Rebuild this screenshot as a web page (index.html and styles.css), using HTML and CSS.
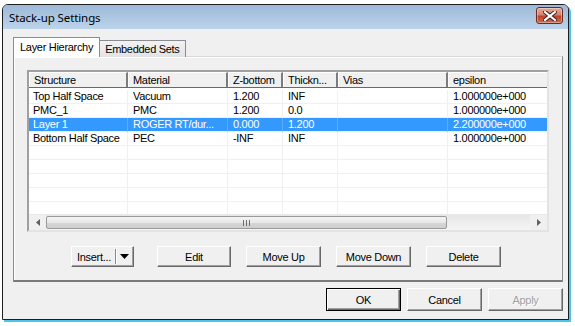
FILE: index.html
```html
<!DOCTYPE html>
<html>
<head>
<meta charset="utf-8">
<link rel="stylesheet" href="styles.css">
</head>
<body>
<div class="window">
  <div class="titlebar">
    <span class="title">Stack-up Settings</span>
    <div class="close">
      <svg width="14" height="10" viewBox="0 0 14 10"><path d="M2 1 L12 9 M12 1 L2 9" stroke="#3b1a14" stroke-width="4" stroke-linecap="square"/><path d="M2 1 L12 9 M12 1 L2 9" stroke="#fff" stroke-width="2.2" stroke-linecap="square"/></svg>
    </div>
  </div>
  <div class="client">
    <div class="tabs">
      <div class="tab active">Layer Hierarchy</div>
      <div class="tab">Embedded Sets</div>
    </div>
    <div class="panel">
      <div class="list">
        <div class="header">
          <div class="hcell c1">Structure</div>
          <div class="hcell c2">Material</div>
          <div class="hcell c3">Z-bottom</div>
          <div class="hcell c4">Thickn...</div>
          <div class="hcell c5">Vias</div>
          <div class="hcell c6">epsilon</div>
        </div>
        <div class="rows">
          <div class="row"><div class="cell c1">Top Half Space</div><div class="cell c2">Vacuum</div><div class="cell c3">1.200</div><div class="cell c4">INF</div><div class="cell c5"></div><div class="cell c6">1.000000e+000</div></div>
          <div class="row"><div class="cell c1">PMC_1</div><div class="cell c2">PMC</div><div class="cell c3">1.200</div><div class="cell c4">0.0</div><div class="cell c5"></div><div class="cell c6">1.000000e+000</div></div>
          <div class="row selected"><div class="cell c1">Layer 1</div><div class="cell c2">ROGER RT/dur...</div><div class="cell c3">0.000</div><div class="cell c4">1.200</div><div class="cell c5"></div><div class="cell c6">2.200000e+000</div></div>
          <div class="row"><div class="cell c1">Bottom Half Space</div><div class="cell c2">PEC</div><div class="cell c3">-INF</div><div class="cell c4">INF</div><div class="cell c5"></div><div class="cell c6">1.000000e+000</div></div>
          <div class="row"><div class="cell c1"></div><div class="cell c2"></div><div class="cell c3"></div><div class="cell c4"></div><div class="cell c5"></div><div class="cell c6"></div></div>
          <div class="row"><div class="cell c1"></div><div class="cell c2"></div><div class="cell c3"></div><div class="cell c4"></div><div class="cell c5"></div><div class="cell c6"></div></div>
          <div class="row"><div class="cell c1"></div><div class="cell c2"></div><div class="cell c3"></div><div class="cell c4"></div><div class="cell c5"></div><div class="cell c6"></div></div>
          <div class="row"><div class="cell c1"></div><div class="cell c2"></div><div class="cell c3"></div><div class="cell c4"></div><div class="cell c5"></div><div class="cell c6"></div></div>
          <div class="row"><div class="cell c1"></div><div class="cell c2"></div><div class="cell c3"></div><div class="cell c4"></div><div class="cell c5"></div><div class="cell c6"></div></div>
        </div>
        <div class="hscroll">
          <div class="arrow"><svg width="4" height="7" viewBox="0 0 4 7"><path d="M4 0 L0 3.5 L4 7 Z" fill="#606060"/></svg></div>
          <div class="track">
            <div class="thumb"><svg width="8" height="6" viewBox="0 0 8 6"><path d="M0.5 0 V6 M3.5 0 V6 M6.5 0 V6" stroke="#707070" stroke-width="1"/></svg></div>
          </div>
          <div class="arrow"><svg width="4" height="7" viewBox="0 0 4 7"><path d="M0 0 L4 3.5 L0 7 Z" fill="#606060"/></svg></div>
        </div>
      </div>
      <div class="actions">
        <div class="btn split"><span class="split-label">Insert...</span><span class="split-sep"></span><span class="split-arrow"><svg width="9" height="5" viewBox="0 0 9 5"><path d="M0 0 H9 L4.5 5 Z" fill="#000"/></svg></span></div>
        <div class="btn w74">Edit</div>
        <div class="btn">Move Up</div>
        <div class="btn">Move Down</div>
        <div class="btn">Delete</div>
      </div>
    </div>
    <div class="footer">
      <div class="btn big default">OK</div>
      <div class="btn big">Cancel</div>
      <div class="btn big disabled">Apply</div>
    </div>
  </div>
</div>
</body>
</html>
```
FILE: styles.css
```css
html, body {
  margin: 0;
  padding: 0;
}
body {
  width: 575px;
  height: 326px;
  background: #ffffff;
  font-family: "Liberation Sans", Arial, sans-serif;
  font-size: 11px;
  letter-spacing: -0.3px;
  color: #000;
  overflow: hidden;
  padding: 4px 0 0 2px;
  box-sizing: border-box;
}
.window {
  width: 567px;
  height: 316px;
  border: 1px solid #1e1e1e;
  border-radius: 6px 6px 0 0;
  box-shadow: 2px 2px 0 #4cc4ec;
  background: #f0f0f0;
  display: flex;
  flex-direction: column;
  box-sizing: border-box;
  overflow: hidden;
}
.titlebar {
  height: 24px;
  flex: none;
  background: linear-gradient(#9db9d8, #bcd3ea);
  display: flex;
  align-items: center;
  padding: 0 5px 0 6px;
}
.title {
  font-family: "Noto Sans", "Liberation Sans", sans-serif;
  font-size: 11.5px;
  letter-spacing: -0.1px;
  color: #000;
  flex: 1;
}
.close {
  width: 25px;
  height: 15px;
  border: 1px solid #6b2a20;
  border-radius: 3px;
  background: linear-gradient(#e3a99c 0%, #d48470 45%, #c0432a 55%, #cf6b4f 100%);
  display: flex;
  align-items: center;
  justify-content: center;
  margin-top: -3px;
  box-shadow: inset 0 0 0 1px rgba(255,255,255,0.35);
}
.client {
  flex: 1;
  padding: 8px 5px 0 10px;
  display: flex;
  flex-direction: column;
}
.tabs {
  display: flex;
  align-items: flex-end;
  height: 20px;
  margin-bottom: -1px;
  position: relative;
  z-index: 1;
}
.tab {
  height: 16px;
  line-height: 16px;
  padding: 0 5px 0 5px;
  border: 1px solid #898c95;
  border-bottom: none;
  background: linear-gradient(#f2f2f2, #e3e3e3);
  margin-left: -1px;
  box-sizing: content-box;
}
.tab.active {
  height: 19px;
  line-height: 18px;
  background: #fff;
  margin-left: 0;
  padding: 0 6px 0 6px;
  border-color: #898c95;
}
.panel {
  height: 226px;
  border: 1px solid #898c95;
  border-top-color: #d9d9d9;
  border-right-color: #8a8a8a;
  border-bottom: 2px solid #7a7a7a;
  background: #f0f0f0;
  box-sizing: border-box;
  padding: 13px 0 0 13px;
  box-shadow: inset 1px 1px 0 #fff;
}
.list {
  width: 522px;
  height: 162px;
  box-sizing: border-box;
  border: 2px solid;
  border-color: #a0a0a0 #e3e3e3 #e3e3e3 #a0a0a0;
  background: #fff;
  display: flex;
  flex-direction: column;
  overflow: hidden;
}
.header {
  display: flex;
  height: 16px;
  flex: none;
  overflow: hidden;
  border-bottom: 1px solid #696969;
  box-sizing: border-box;
}
.hcell {
  flex: none;
  box-sizing: border-box;
  background: #f0f0f0;
  border-top: 1px solid #fff;
  border-left: 1px solid #fff;
  border-right: 2px solid #7c7c7c;
  line-height: 14px;
  padding-left: 4px;
  white-space: nowrap;
  overflow: hidden;
}
.hcell.c6 { border-right: none; }
.c1 { width: 99px; }
.c2 { width: 100px; }
.c3 { width: 55px; }
.c4 { width: 55px; }
.c5 { width: 110px; }
.c6 { width: 140px; }
.rows {
  flex: 1;
  padding-top: 2px;
  overflow: hidden;
}
.row {
  display: flex;
  height: 14px;
}
.cell {
  flex: none;
  box-sizing: border-box;
  border-right: 1px solid #f0f0f0;
  border-bottom: 1px solid #f0f0f0;
  line-height: 13px;
  padding-left: 5px;
  white-space: nowrap;
  overflow: hidden;
}
.cell.c1 { padding-left: 4px; }
.row.selected .cell {
  background: #3399ff;
  color: #fff;
  border-right-color: #5aadff;
}
.hscroll {
  height: 16px;
  flex: none;
  display: flex;
  background: #f0f0f0;
  border-top: 1px solid #e8e8e8;
  box-sizing: border-box;
}
.arrow {
  width: 17px;
  flex: none;
  display: flex;
  align-items: center;
  justify-content: center;
}
.track {
  flex: 1;
  padding: 1px 0;
  background: linear-gradient(#e6e6e6, #f5f5f5);
}
.thumb {
  width: 401px;
  height: 13px;
  box-sizing: border-box;
  border: 1px solid #9a9a9a;
  border-radius: 2px;
  background: linear-gradient(#f4f4f4 0%, #e8e8e8 50%, #d6d6d6 51%, #cfcfcf 100%);
  display: flex;
  align-items: center;
  justify-content: center;
}
.actions {
  display: flex;
  gap: 15px;
  margin-top: 14px;
  padding-left: 44px;
}
.btn {
  width: 75px;
  height: 21px;
  box-sizing: border-box;
  background: #f0f0f0;
  border: 1px solid;
  border-color: #fff #696969 #696969 #fff;
  box-shadow: inset -1px -1px 0 #a0a0a0;
  display: flex;
  align-items: center;
  justify-content: center;
  white-space: nowrap;
}
.btn.w74 { width: 74px; }
.btn.split {
  width: 63px;
  margin-right: 8px;
  justify-content: flex-start;
  padding-left: 5px;
}
.split-label {
  width: 38px;
}
.split-sep {
  width: 1px;
  height: 15px;
  background: #8a8a8a;
  border-right: 1px solid #fff;
}
.split-arrow {
  flex: 1;
  display: flex;
  justify-content: center;
  padding-right: 2px;
}
.footer {
  display: flex;
  justify-content: flex-end;
  gap: 6px;
  margin-top: 6px;
}
.btn.big {
  height: 23px;
}
.btn.default {
  border: 1px solid #000;
  box-shadow: inset 1px 1px 0 #fff, inset -1px -1px 0 #696969, inset -2px -2px 0 #a0a0a0;
}
.btn.disabled {
  color: #a0a0a0;
  text-shadow: 1px 1px 0 #fff;
}
```
